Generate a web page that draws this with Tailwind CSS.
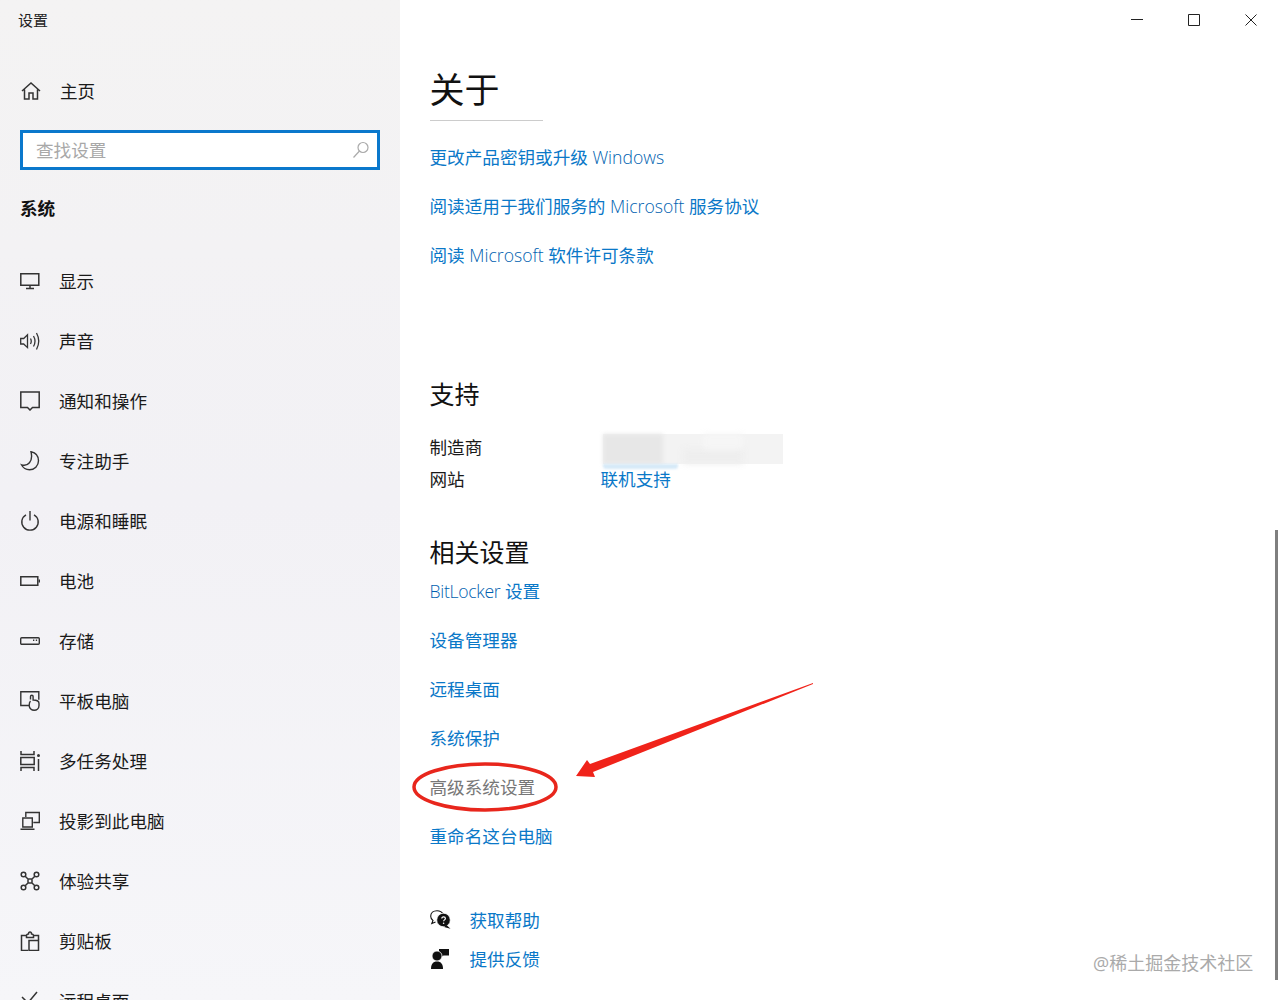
<!DOCTYPE html>
<html lang="zh-CN">
<head>
<meta charset="utf-8">
<title>设置</title>
<script src="https://cdn.jsdelivr.net/npm/@tailwindcss/browser@4"></script>
</head>
<body class="m-0 bg-white font-['Open_Sans','Noto_Sans_CJK_SC',sans-serif] font-normal">
<div class="relative flex h-[1000px] w-[1280px] overflow-hidden bg-white text-[#1a1a1a]">

  <aside class="flex h-[1000px] w-[400px] shrink-0 flex-col overflow-hidden bg-linear-to-b from-[#f4f3f3] via-[#f2f1f5] to-[#f6f6f9] *:shrink-0">
    <div class="flex h-[40px] items-center pl-[18px] text-[15px] text-[#222]">设置</div>
    <div class="mt-[21px] flex h-[60px] items-center gap-[19px] pl-[21px] text-[17.6px]">
      <svg class="h-[20px] w-[20px]" viewBox="0 0 20 20" fill="none" stroke="#333" stroke-width="1.5"><path d="M1 10 10 2l9 8M3.5 8.5V18H8v-6h4v6h4.500V8.500"/></svg>
      <span>主页</span>
    </div>
    <div class="mx-[20px] mt-[9px] flex h-[40px] items-center justify-between border-[3px] border-[#0a78cc] bg-white pl-[13px] pr-[7px]">
      <span class="text-[17.6px] text-[#a8a8a8]">查找设置</span>
      <svg class="h-[18px] w-[18px]" viewBox="0 0 18 18" fill="none" stroke="#aaa" stroke-width="1.200"><circle cx="11" cy="6.500" r="5"/><path d="M7.500 10 1.500 16.500"/></svg>
    </div>
    <div class="mt-[18px] flex h-[40px] items-center pl-[20px] text-[17.6px] font-bold text-[#111]">系统</div>

    <nav class="mt-[23px] flex flex-col text-[17.6px]">
      <a class="flex h-[60px] items-center gap-[19px] pl-[20px]">
        <svg class="h-[20px] w-[20px]" viewBox="0 0 20 20" fill="none" stroke="#333" stroke-width="1.500"><path d="M.8 2.800h18v11.500H.8zM10 14.500v3M6 17.500h8"/></svg><span>显示</span>
      </a>
      <a class="flex h-[60px] items-center gap-[19px] pl-[20px]">
        <svg class="h-[20px] w-[20px]" viewBox="0 0 20 20" fill="none" stroke="#333" stroke-width="1.300"><path d="M.7 7.500h3L7.500 3.800v12.800L3.700 13h-3zM10.500 7.500q1.500 2.700 0 5.500M13.500 5q3 5.200 0 10.500M16.500 2q4.500 8 0 16.500"/></svg><span>声音</span>
      </a>
      <a class="flex h-[60px] items-center gap-[19px] pl-[20px]">
        <svg class="h-[20px] w-[20px]" viewBox="0 0 20 20" fill="none" stroke="#333" stroke-width="1.500"><path d="M.8 1h18.400v15.500h-6.700L10 19l-2.500-2.500H.8z"/></svg><span>通知和操作</span>
      </a>
      <a class="flex h-[60px] items-center gap-[19px] pl-[20px]">
        <svg class="h-[20px] w-[20px]" viewBox="0 0 20 20" fill="none" stroke="#333" stroke-width="1.400"><path d="M11 .8c4.500 1 7.500 4.500 7.500 9 0 5-4 9-9 9-3.500 0-6.500-2-8-5 6 2 12-3 9.500-13z"/></svg><span>专注助手</span>
      </a>
      <a class="flex h-[60px] items-center gap-[19px] pl-[20px]">
        <svg class="h-[20px] w-[20px]" viewBox="0 0 20 20" fill="none" stroke="#333" stroke-width="1.400"><path d="M6 3.800a8.200 8.200 0 1 0 8 0M10 0v9.500"/></svg><span>电源和睡眠</span>
      </a>
      <a class="flex h-[60px] items-center gap-[19px] pl-[20px]">
        <svg class="h-[20px] w-[20px]" viewBox="0 0 20 20" fill="none" stroke="#333" stroke-width="1.500"><path d="M.8 5.800h17v8.500H.8z"/><path d="M19.300 8.500v3" stroke-width="1.400"/></svg><span>电池</span>
      </a>
      <a class="flex h-[60px] items-center gap-[19px] pl-[20px]">
        <svg class="h-[20px] w-[20px]" viewBox="0 0 20 20" fill="none" stroke="#333" stroke-width="1.400"><rect x=".7" y="6.700" width="18.600" height="6.600" rx="1"/><path d="M13 9.300h1.300M15.800 9.300h1.300"/></svg><span>存储</span>
      </a>
      <a class="flex h-[60px] items-center gap-[19px] pl-[20px]">
        <svg class="h-[20px] w-[20px]" viewBox="0 0 20 20" fill="none" stroke="#333" stroke-width="1.400"><path d="M9 14.500H.8V.8h18v8"/><path d="M10.500 8.500V5.500a1.300 1.300 0 0 1 2.600 0v3.500c3 0 5.900.5 5.900 3.500v2c0 2.800-2.200 4.800-4.800 4.800s-5-2-5-4.800c0-2 .2-3.500 1.300-4.500"/></svg><span>平板电脑</span>
      </a>
      <a class="flex h-[60px] items-center gap-[19px] pl-[20px]">
        <svg class="h-[20px] w-[20px]" viewBox="0 0 20 20" fill="none" stroke="#333" stroke-width="1.500"><path d="M1 0v3.500h13V0M.8 6.500h13.400v7H.8zM1 20v-3.500h13V20M18.500 8v12"/><circle cx="18.500" cy="4.500" r="1.500" fill="#333" stroke="none"/></svg><span>多任务处理</span>
      </a>
      <a class="flex h-[60px] items-center gap-[19px] pl-[20px]">
        <svg class="h-[20px] w-[20px]" viewBox="0 0 20 20" fill="none" stroke="#333" stroke-width="1.400"><path d="M5.800 6V1.500h13.500v10h-6"/><path d="M2.800 7h9.500v9H2.800zM.5 18.300h14"/></svg><span>投影到此电脑</span>
      </a>
      <a class="flex h-[60px] items-center gap-[19px] pl-[20px]">
        <svg class="h-[20px] w-[20px]" viewBox="0 0 20 20" fill="none" stroke="#333" stroke-width="1.500"><circle cx="3.500" cy="3.500" r="2.300"/><circle cx="16.500" cy="3.500" r="2.300"/><circle cx="3.500" cy="16.500" r="2.300"/><circle cx="16.500" cy="16.500" r="2.300"/><path d="M5.200 5.200l3 3M14.800 5.200l-3 3M5.200 14.800l3-3M14.800 14.800l-3-3M8 8h4v4H8z"/></svg><span>体验共享</span>
      </a>
      <a class="flex h-[60px] items-center gap-[19px] pl-[20px]">
        <svg class="h-[20px] w-[20px]" viewBox="0 0 20 20" fill="none" stroke="#333" stroke-width="1.500"><path d="M7 4.500H1.500v15H8M14 4.500h4.500V9M6.500 4.500c0-1 1-1.200 2-1.500 0-1 .7-2 1.500-2s1.500 1 1.500 2c1 .3 2 .5 2 1.500v2h-7z"/><path d="M9 9.500h9.500v10H9z"/></svg><span>剪贴板</span>
      </a>
      <a class="flex h-[60px] items-center gap-[19px] pl-[20px]">
        <svg class="h-[20px] w-[20px]" viewBox="0 0 20 20" fill="none" stroke="#333" stroke-width="1.500"><path d="M2 6l5 5M17 1 7 13"/></svg><span>远程桌面</span>
      </a>
    </nav>
  </aside>

  <main class="flex min-w-0 flex-1 flex-col pl-[29.500px]">
    <div class="flex h-[40px] items-center justify-end gap-[45px] pr-[23px]">
      <svg class="h-[12px] w-[12px]" viewBox="0 0 12 12" fill="none" stroke="#222"><path d="M0 5.500h12"/></svg>
      <svg class="h-[12px] w-[12px]" viewBox="0 0 12 12" fill="none" stroke="#222"><path d="M.5.500h11v11H.5z"/></svg>
      <svg class="h-[12px] w-[12px]" viewBox="0 0 12 12" fill="none" stroke="#222"><path d="M.5.500l11 11M11.500.500l-11 11"/></svg>
    </div>
    <div class="flex h-[81px] w-[113px] items-end border-b border-[#ccc] pb-[5px] text-[35px] leading-[50px] text-[#111]">关于</div>

    <div class="mt-[12px] flex flex-col text-[17.6px] text-[#0a78c8]">
      <a class="flex h-[49px] items-center"><span>更改产品密钥或升级 <span class="font-light text-[#005fb0]">Windows</span></span></a>
      <a class="flex h-[49px] items-center"><span>阅读适用于我们服务的 <span class="font-light text-[#005fb0]">Microsoft</span> 服务协议</span></a>
      <a class="flex h-[49px] items-center"><span>阅读 <span class="font-light text-[#005fb0]">Microsoft</span> 软件许可条款</span></a>
    </div>

    <h2 class="mt-[95px] flex h-[40px] items-center text-[25px] font-normal text-[#111]">支持</h2>
    <div class="mt-[16px] flex flex-col text-[17.6px]">
      <div class="flex h-[32px] items-center">
        <span class="w-[173px]">制造商</span>
        <div class="relative mt-[4px] h-[30px] w-[180px] bg-[#f3f3f3]">
          <div class="h-[30px] w-[60px] bg-[#e7e7e7] blur-[2px]"></div>
          <div class="absolute left-[80px] top-[15px] h-[15px] w-[60px] bg-[#eeeeee] blur-[3px]"></div>
          <div class="absolute left-[100px] top-0 h-[15px] w-[40px] bg-[#f6f6f6] blur-[3px]"></div>
          <div class="absolute left-0 top-[30px] h-[5px] w-[75px] rounded-b-[3px] bg-[#d6eaf8] blur-[1px]"></div>
        </div>
      </div>
      <div class="flex h-[32px] items-center">
        <span class="w-[171px]">网站</span>
        <a class="text-[#0a78c8]">联机支持</a>
      </div>
    </div>

    <h2 class="mt-[43px] flex h-[30px] items-center text-[25px] font-normal text-[#111]">相关设置</h2>
    <div class="-mt-px flex flex-col text-[17.6px] text-[#0a78c8]">
      <a class="flex h-[48.900px] items-center"><span><span class="font-light tracking-[-0.3px] text-[#005fb0]">BitLocker</span> 设置</span></a>
      <a class="flex h-[48.900px] items-center">设备管理器</a>
      <a class="flex h-[48.900px] items-center">远程桌面</a>
      <a class="flex h-[48.900px] items-center">系统保护</a>
      <a class="flex h-[48.900px] items-center text-[#777]">高级系统设置</a>
      <a class="flex h-[48.900px] items-center">重命名这台电脑</a>
    </div>

    <div class="mt-[40.400px] flex flex-col text-[17.6px] text-[#0a78c8]">
      <a class="flex h-[39px] items-center gap-[19px]">
        <svg class="h-[21px] w-[21px]" viewBox="0 0 21 21"><path d="M7 .7C3.400.7.700 3 .700 6.200c0 1.800.9 3.300 2.300 4.300L1.800 13.500 5.500 12" fill="#fff" stroke="#111" stroke-width="1.100"/><path d="M7 .7c2.700 0 5 1.200 6 3.300" fill="none" stroke="#111" stroke-width="1.100"/><circle cx="13.500" cy="10" r="6.800" fill="#111" stroke="#fff" stroke-width=".8"/><path d="M16.500 15l4 3.800-6.500-1.800z" fill="#111"/><path d="M11.800 8.500c0-2.200 3.600-2.200 3.600 0 0 1.400-1.800 1.400-1.800 2.800" fill="none" stroke="#fff" stroke-width="1.200"/><circle cx="13.600" cy="13.300" r=".8" fill="#fff"/></svg>
        <span>获取帮助</span>
      </a>
      <a class="flex h-[39px] items-center gap-[19px]">
        <svg class="h-[21px] w-[21px]" viewBox="0 0 21 21"><path d="M9 0h10v6.500h-5.500L10.500 8.500V6.500H9z" fill="#111"/><circle cx="7" cy="7" r="5" fill="#111" stroke="#fff" stroke-width=".8"/><path d="M1 20c0-5 2-7.500 6-7.500s6 2.500 6 7.500z" fill="#111"/></svg>
        <span>提供反馈</span>
      </a>
    </div>
  </main>

  <div class="absolute left-[1275px] top-[530px] h-[450px] w-[2.500px] bg-[#7f7f7f]"></div>
  <div class="absolute left-[1093px] top-[950px] text-[18px] leading-[26px] text-[#aaa]">@稀土掘金技术社区</div>

  <svg class="pointer-events-none absolute left-0 top-0 h-[1000px] w-[1280px]" viewBox="0 0 1280 1000" fill="none">
    <ellipse cx="485" cy="787" rx="71" ry="23" stroke="#e8261c" stroke-width="3.500"/>
    <path d="M813 683 813 684 598 770 593 772 595 777 576 776 587 760 590 764z" fill="#f0231a"/>
  </svg>
</div>
</body>
</html>
